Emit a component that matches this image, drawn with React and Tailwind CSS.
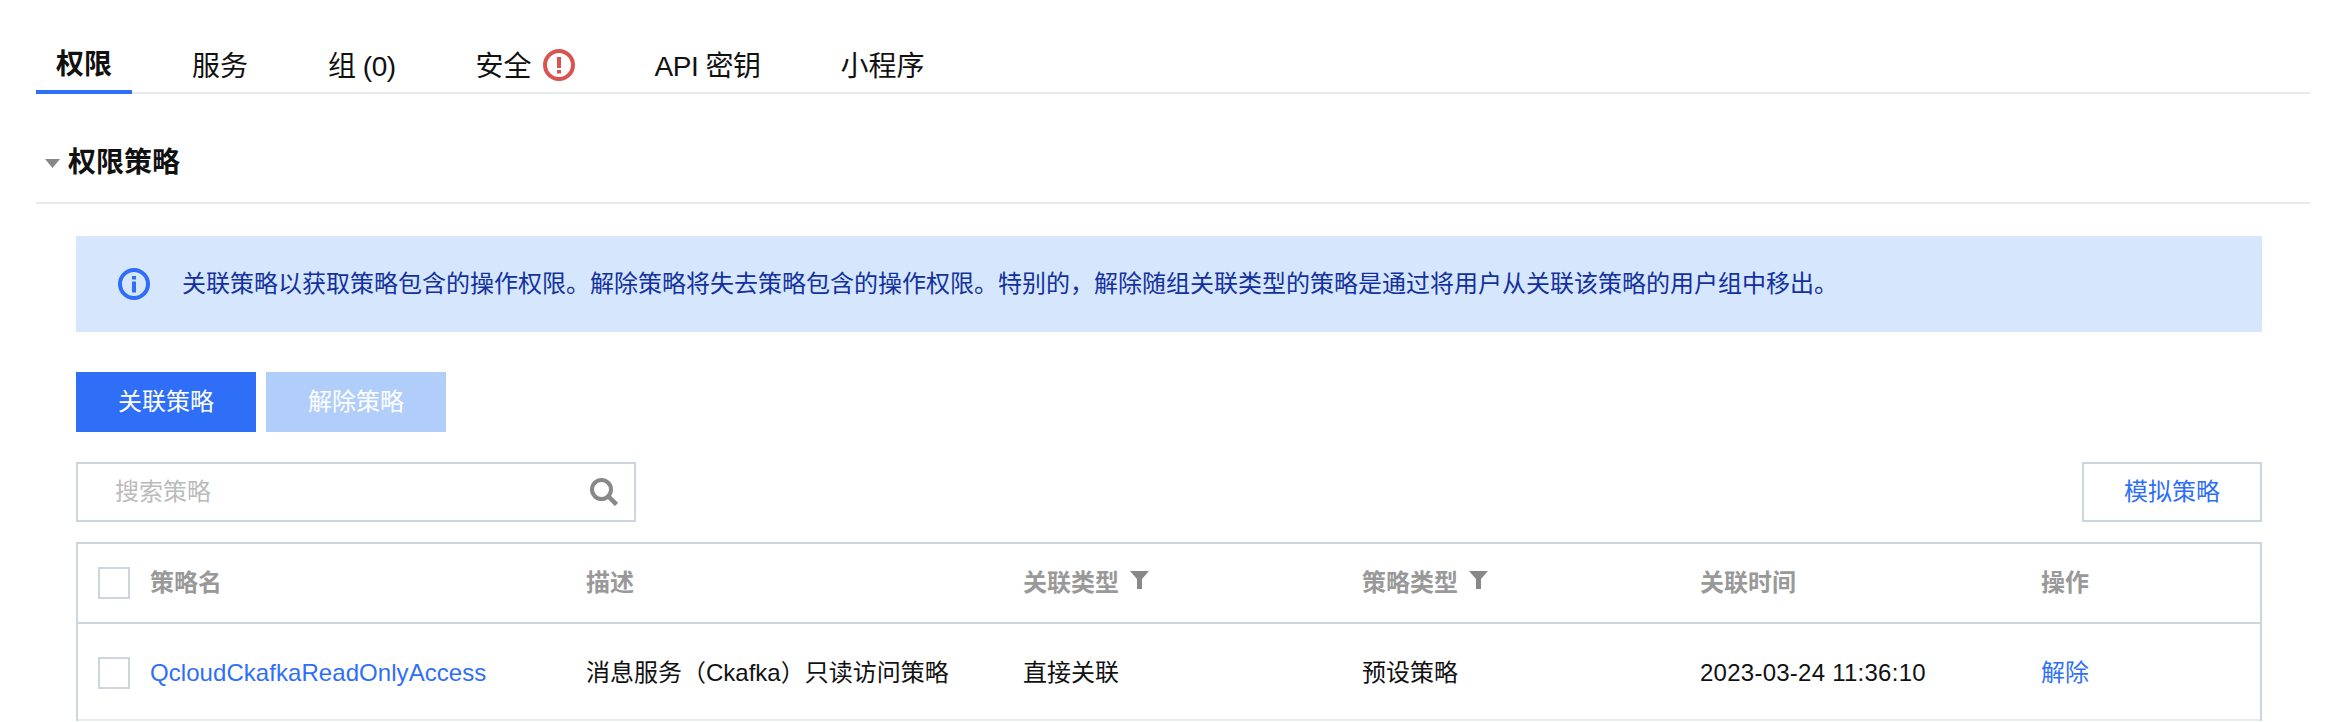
import React from 'react'

const font = { fontFamily: '"Liberation Sans", "Noto Sans CJK SC", sans-serif' }

const tabs = ['权限', '服务', '组 (0)', '安全', 'API 密钥', '小程序']

function FilterIcon() {
  return (
    <svg width="19" height="18" viewBox="0 0 19 18" className="ml-[11px] mb-[6px] shrink-0">
      <path d="M0 0H19L12 8V18H7V8Z" fill="#888888" />
    </svg>
  )
}

function Checkbox() {
  return <span className="block w-8 h-8 border-2 border-[#cfd5de] bg-white shrink-0" />
}

function App() {
  return (
    <div className="w-[2334px] h-[722px] overflow-hidden bg-white pl-9 pr-6 text-[24px] text-[#111111]" style={font}>
      {/* 标签页 */}
      <div className="flex pt-[34px] border-b-2 border-[#e7eaef] h-[94px]">
        {tabs.map((tab, i) => (
          <div
            key={tab}
            className={`h-[60px] px-5 pt-1.5 mr-10 flex items-center text-[28px] ${i === 0 ? 'font-bold border-b-4 border-[#2f6ff7]' : ''} ${i === 2 || i === 4 ? 'tracking-[-0.5px]' : ''}`}
          >
            <span>{tab}</span>
            {tab === '安全' && (
              <svg width="32" height="32" viewBox="0 0 32 32" className="ml-[11px] mb-1">
                <circle cx="16" cy="16" r="14" fill="none" stroke="#d9534f" strokeWidth="4" />
                <rect x="14" y="8" width="4" height="11" fill="#d9534f" />
                <rect x="14" y="21" width="4" height="3.5" fill="#d9534f" />
              </svg>
            )}
          </div>
        ))}
      </div>

      {/* 权限策略 */}
      <div className="flex items-center pt-[48px] pb-[18px] border-b-2 border-[#e7eaef]">
        <svg width="15" height="9" viewBox="0 0 15 9" className="ml-[9px] mr-2 shrink-0">
          <path d="M0 0H15L7.5 9Z" fill="#888888" />
        </svg>
        <h3 className="text-[28px] leading-[42px] font-bold">权限策略</h3>
      </div>

      <div className="pl-10 pr-12">
        {/* 提示 */}
        <div className="mt-8 h-24 bg-[#d6e6fd] flex items-center pl-[42px]">
          <svg width="32" height="32" viewBox="0 0 32 32" className="shrink-0">
            <circle cx="16" cy="16" r="14" fill="none" stroke="#2f6ff7" strokeWidth="4" />
            <rect x="14" y="8" width="4" height="3.5" fill="#2f6ff7" />
            <rect x="14" y="13.5" width="4" height="11" fill="#2f6ff7" />
          </svg>
          <p className="ml-8 text-[#12319e]">
            关联策略以获取策略包含的操作权限。解除策略将失去策略包含的操作权限。特别的，解除随组关联类型的策略是通过将用户从关联该策略的用户组中移出。
          </p>
        </div>

        {/* 按钮 */}
        <div className="mt-10 flex gap-[10px]">
          <button className="w-[180px] h-[60px] bg-[#2f6ff7] text-white">关联策略</button>
          <button className="w-[180px] h-[60px] bg-[#b1cefa] text-white">解除策略</button>
        </div>

        {/* 搜索 */}
        <div className="mt-[30px] flex justify-between">
          <div className="w-[560px] h-[60px] border-2 border-[#cfd5de] flex items-center justify-between pl-[37px] pr-4">
            <span className="text-[#bbbbbb]">搜索策略</span>
            <svg width="28" height="28" viewBox="0 0 28 28">
              <circle cx="11.5" cy="11.5" r="9.5" fill="none" stroke="#888888" strokeWidth="4" />
              <path d="M18 18L26.5 26.5" stroke="#888888" strokeWidth="4.5" />
            </svg>
          </div>
          <button className="w-[180px] h-[60px] border-2 border-[#cfd5de] text-[#2f6ff7]">模拟策略</button>
        </div>

        {/* 表格 */}
        <div className="mt-5 border-2 border-[#cfd5de] border-b-0">
          <div className="grid grid-cols-[488px_437px_339px_338px_341px_1fr] h-[80px] items-center border-b-2 border-[#cfd5de] text-[#999999] font-bold">
            <div className="flex items-center pl-5">
              <Checkbox />
              <span className="ml-5">策略名</span>
            </div>
            <div className="pl-5">描述</div>
            <div className="pl-5 flex items-center">关联类型<FilterIcon /></div>
            <div className="pl-5 flex items-center">策略类型<FilterIcon /></div>
            <div className="pl-5">关联时间</div>
            <div className="pl-5">操作</div>
          </div>
          <div className="grid grid-cols-[488px_437px_339px_338px_341px_1fr] h-[97px] pt-[2px] items-center border-b-2 border-[#e7eaef]">
            <div className="flex items-center pl-5">
              <Checkbox />
              <a className="ml-5 text-[#2f6ff7] tracking-[0.06px]">QcloudCkafkaReadOnlyAccess</a>
            </div>
            <div className="pl-5">消息服务（Ckafka）只读访问策略</div>
            <div className="pl-5">直接关联</div>
            <div className="pl-5">预设策略</div>
            <div className="pl-5 tracking-[0.25px]">2023-03-24 11:36:10</div>
            <div className="pl-5"><a className="text-[#2f6ff7]">解除</a></div>
          </div>
        </div>
      </div>
    </div>
  )
}

export default App
